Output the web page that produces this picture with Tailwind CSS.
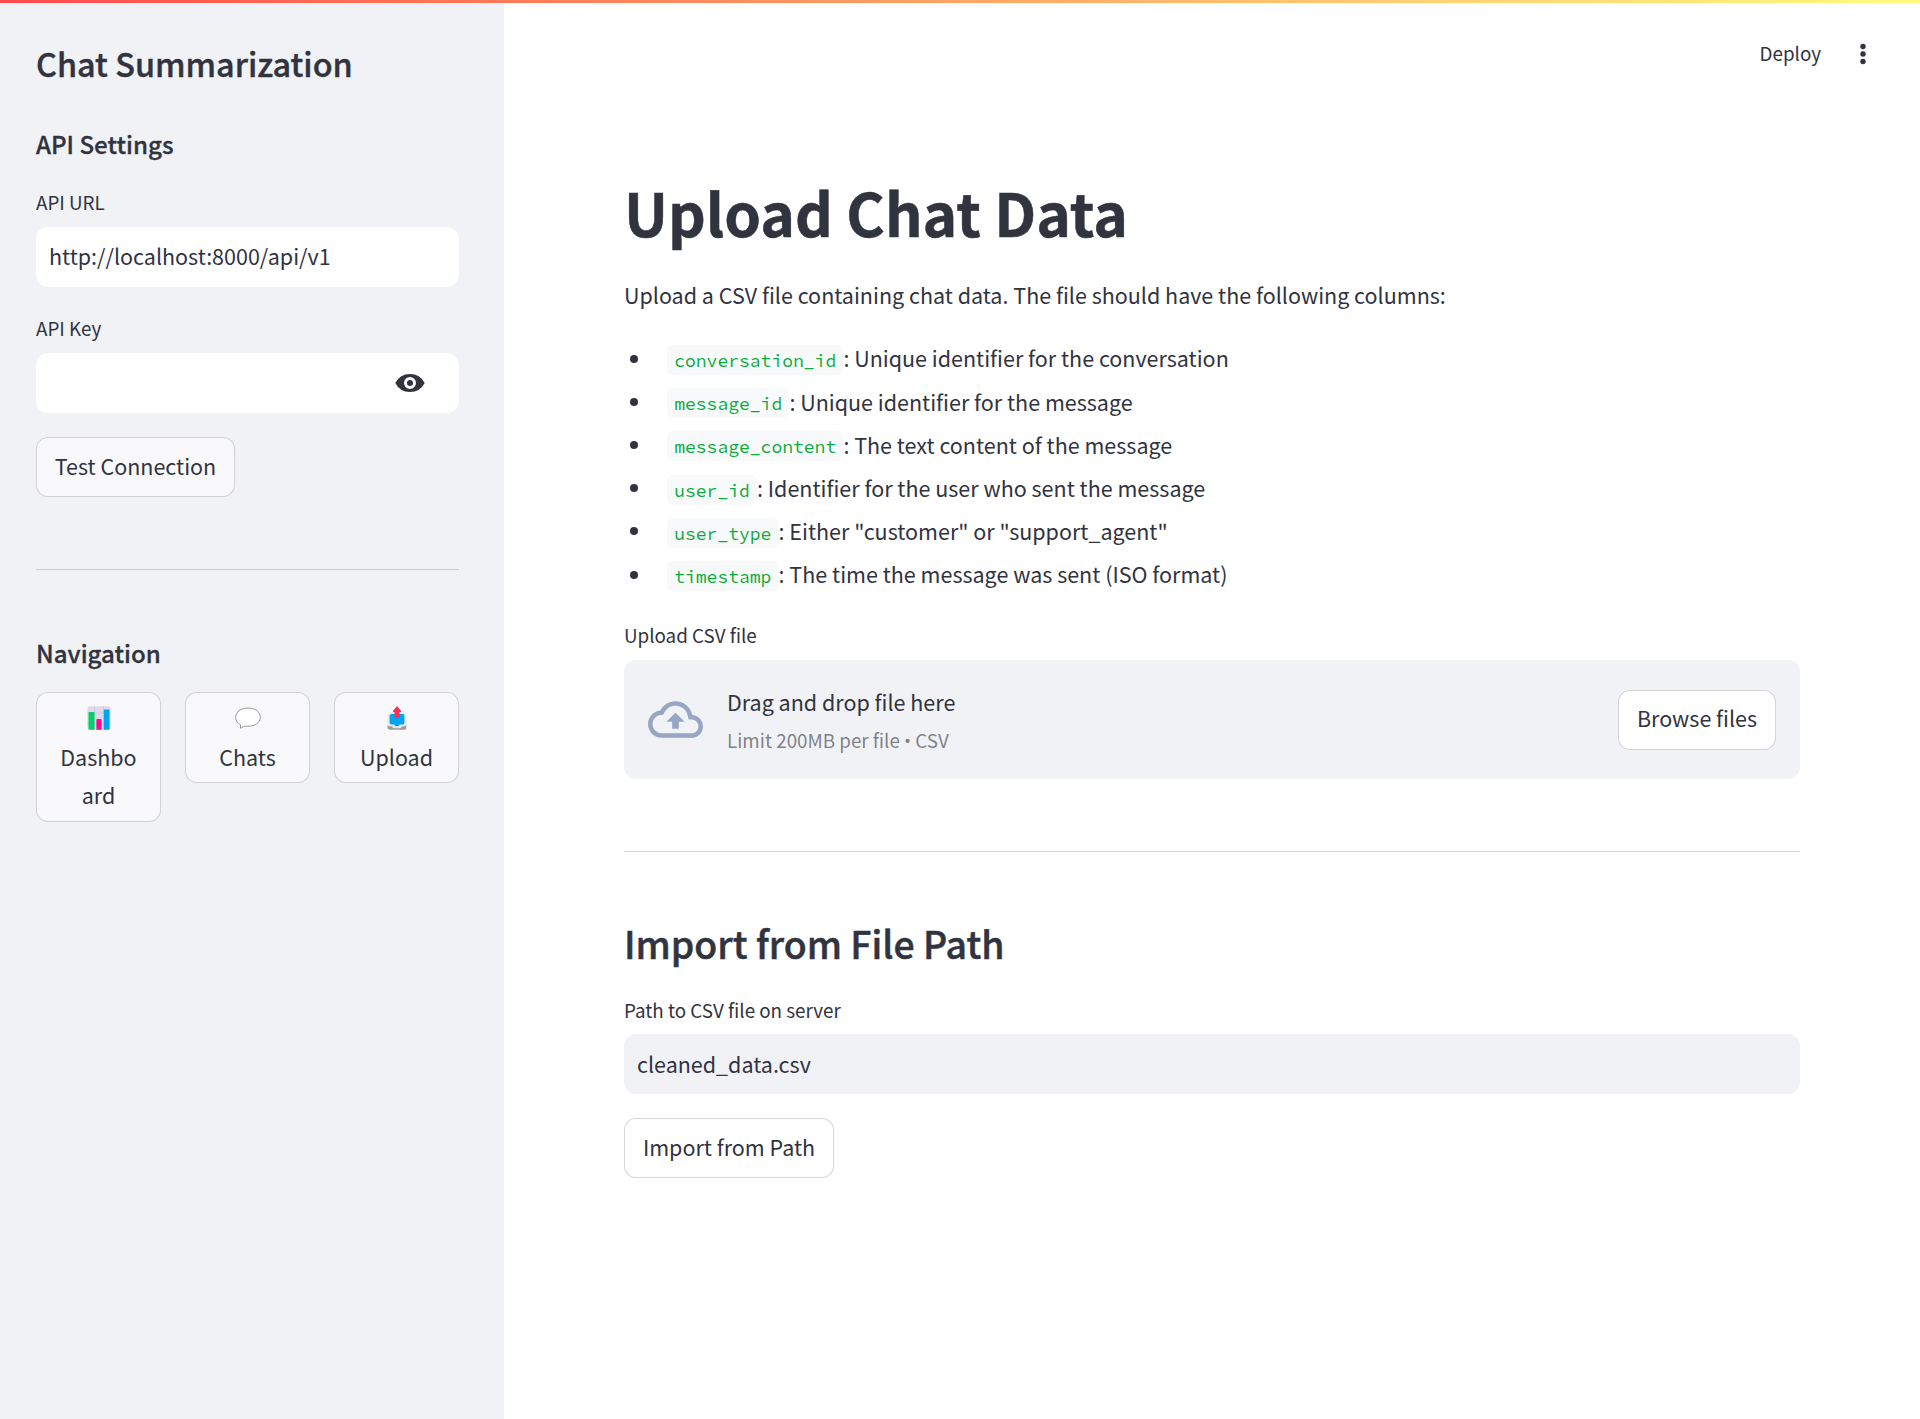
<!DOCTYPE html>
<html lang="en">
<head>
<meta charset="utf-8">
<title>Chat Summarization</title>
<script src="https://cdn.jsdelivr.net/npm/@tailwindcss/browser@4"></script>
</head>
<body class="bg-white text-[#31333f] font-['Noto_Sans_CJK_SC','Noto_Sans',sans-serif] text-[21.5px] leading-[38.4px]">
<div class="relative flex h-[1419px] w-[1920px] overflow-hidden">
  <div class="absolute inset-x-0 top-0 h-[3px] bg-linear-to-r/srgb from-[#ff4b4b] to-[#fffd80]"></div>

  <aside class="flex w-[504px] shrink-0 flex-col bg-[#f0f2f6] pt-[41px] pr-[45px] pl-9">
    <h2 class="text-[32.4px] leading-[44px] font-medium [-webkit-text-stroke:0.4px]">Chat Summarization</h2>
    <h3 class="mt-[43px] text-[24.1px] leading-8 font-medium [-webkit-text-stroke:0.3px]">API Settings</h3>
    <label class="mt-[26px] text-[18.8px] leading-8">API URL</label>
    <div class="mt-[9px] flex h-[60px] items-center rounded-xl bg-white px-[13px] pb-[1px]">http://localhost:8000/api/v1</div>
    <label class="mt-[25px] text-[18.8px] leading-8">API Key</label>
    <div class="mt-[9px] flex h-[60px] items-center justify-end rounded-xl bg-white pr-[34px]">
      <svg class="size-[30px]" viewBox="0 0 20 20" fill="currentColor"><path d="M.2 10a11 11 0 0 1 19.6 0A11 11 0 0 1 .2 10zm9.8 4a4 4 0 1 0 0-8 4 4 0 0 0 0 8zm0-2a2 2 0 1 1 0-4 2 2 0 0 1 0 4z"/></svg>
    </div>
    <button class="mt-6 flex h-[60px] w-[199px] items-center justify-center rounded-xl border border-[#31333f]/20 bg-[#f9f9fc] pb-[2px]">Test Connection</button>
    <hr class="mt-[72px] border-t border-[#31333f]/20">
    <h3 class="mt-[66.500px] text-[24.1px] leading-8 font-medium [-webkit-text-stroke:0.3px]">Navigation</h3>
    <div class="mt-[23.900px] grid grid-cols-3 items-start gap-6">
      <button class="flex flex-col items-center rounded-xl border border-[#31333f]/20 bg-[#f9f9fc] py-[6px]">
        <span class="flex h-[38.4px] items-center pb-[2px]"><svg class="size-6" viewBox="0 0 24 24"><rect x=".3" y=".3" width="23.4" height="23.4" rx="3" fill="#e1d8ec"/><path d="M7.5.3v23.4M16.5.3v23.4M.3 7h23.4M.3 17h23.4" stroke="#cdc4d6" stroke-width=".8"/><path d="M1.5 7a1 1 0 0 1 1-1h4a1 1 0 0 1 1 1v16.7h-5a1 1 0 0 1-1-1z" fill="#00d26a"/><path d="M9.4 14a1 1 0 0 1 1-1h3.2a1 1 0 0 1 1 1v9.7H9.4z" fill="#f70a8d"/><path d="M16.8 4.4a1 1 0 0 1 1-1h3.7a1 1 0 0 1 1 1v18.3a1 1 0 0 1-1 1h-4.7z" fill="#00a6ed"/></svg></span>
        <span>Dashbo</span><span>ard</span>
      </button>
      <button class="flex flex-col items-center rounded-xl border border-[#31333f]/20 bg-[#f9f9fc] py-[6px]">
        <span class="flex h-[38.4px] items-center pb-[2px]"><svg class="h-6 w-[26px]" viewBox="0 0 26 24"><path d="M13 2C6 2 .7 6 .7 11.2c0 3.7 1.8 6 4.8 7.6v3.4l3-1.6c1.5-.5 3-.4 4.5-.4 7 0 12.3-3.6 12.3-9S20 2 13 2z" fill="#fff" stroke="#8f8f91" stroke-width=".9"/></svg></span>
        <span>Chats</span>
      </button>
      <button class="flex flex-col items-center rounded-xl border border-[#31333f]/20 bg-[#f9f9fc] py-[6px]">
        <span class="flex h-[38.4px] items-center pb-[2px]"><svg class="size-6" viewBox="0 0 24 24"><path d="M2.6 19h18.8v2.2a2.5 2.5 0 0 1-2.5 2.5H5.1a2.5 2.5 0 0 1-2.5-2.5z" fill="#9b9b9b"/><path d="M5 6.5h14l2.4 2V20l-4 .6-2 1.7H8.6l-2-1.7-4-.6V8.5z" fill="#e6e6e6"/><path d="M4.6 10a2 2 0 0 1 2-2h10.8a2 2 0 0 1 2 2v6.5a2 2 0 0 1-2 2h-2.6L13.5 20h-3l-1.3-1.5H6.6a2 2 0 0 1-2-2z" fill="#00a6ed"/><path d="M11.3.7a1 1 0 0 1 1.4 0l3.2 4c.5.7.1 1.4-.6 1.4h-.8v5.6h-5V6.1h-.8c-.7 0-1.1-.7-.6-1.4z" fill="#fa2f5b"/></svg></span>
        <span>Upload</span>
      </button>
    </div>
  </aside>

  <div class="flex grow flex-col">
    <header class="flex h-[108px] items-center justify-end gap-[39px] pr-[54px]">
      <span class="pb-[3px] text-[18.8px] leading-8">Deploy</span>
      <svg class="h-6 w-[6px]" viewBox="0 0 6 24" fill="currentColor"><circle cx="3" cy="4.5" r="2.7"/><circle cx="3" cy="12" r="2.7"/><circle cx="3" cy="19.5" r="2.7"/></svg>
    </header>
    <main class="flex flex-col px-[120px] pt-16">
      <h1 class="text-[58.8px] leading-[80px] font-bold [-webkit-text-stroke:0.5px]">Upload Chat Data</h1>
      <p class="mt-6">Upload a CSV file containing chat data. The file should have the following columns:</p>
      <ul class="mt-[25px] flex flex-col gap-[4.8px] [&_code]:mt-[5.6px] [&_code]:self-start [&_code]:rounded-md [&_code]:bg-[#f8f9fb] [&_code]:px-[7.2px] [&_code]:pt-[2px] [&_code]:font-['Source_Code_Pro','Noto_Sans_Mono',monospace] [&_code]:text-[18px] [&_code]:leading-[28px] [&_code]:text-[#09ab3b] [&_i]:mr-[29px] [&_i]:ml-[6px] [&_i]:size-2 [&_i]:rounded-full [&_i]:bg-[#31333f]">
        <li class="flex items-center"><i></i><code>conversation_id</code><span>: Unique identifier for the conversation</span></li>
        <li class="flex items-center"><i></i><code>message_id</code><span>: Unique identifier for the message</span></li>
        <li class="flex items-center"><i></i><code>message_content</code><span>: The text content of the message</span></li>
        <li class="flex items-center"><i></i><code>user_id</code><span>: Identifier for the user who sent the message</span></li>
        <li class="flex items-center"><i></i><code>user_type</code><span>: Either "customer" or "support_agent"</span></li>
        <li class="flex items-center"><i></i><code>timestamp</code><span>: The time the message was sent (ISO format)</span></li>
      </ul>
      <label class="mt-[25px] text-[18.8px] leading-8">Upload CSV file</label>
      <section class="mt-[9.2px] flex h-[119px] items-center rounded-xl bg-[#f0f2f6] px-6">
        <svg class="size-[55px]" viewBox="0 0 24 24" fill="#97a6c3"><path d="M19.35 10.04C18.67 6.59 15.64 4 12 4 9.11 4 6.6 5.64 5.35 8.04 2.34 8.36 0 10.91 0 14c0 3.31 2.69 6 6 6h13c2.76 0 5-2.24 5-5 0-2.64-2.05-4.78-4.65-4.96zM19 18H6c-2.21 0-4-1.79-4-4 0-2.05 1.53-3.76 3.56-3.97l1.07-.11.5-.95C8.08 7.14 9.94 6 12 6c2.62 0 4.88 1.86 5.39 4.43l.3 1.5 1.53.11c1.56.1 2.78 1.41 2.78 2.96 0 1.65-1.35 3-3 3zM8 13h2.55v3h2.9v-3H16l-4-4-4 4z"/></svg>
        <div class="ml-6 flex grow flex-col pt-1">
          <span>Drag and drop file here</span>
          <span class="text-[18.8px] leading-[37px] text-[#31333f]/60">Limit 200MB per file <span class="font-['Open_Sans',sans-serif]">•</span> CSV</span>
        </div>
        <button class="flex h-[60px] w-[158px] items-center justify-center rounded-xl border border-[#31333f]/20 bg-white pb-[2px]">Browse files</button>
      </section>
      <hr class="mt-[72px] border-t border-[#31333f]/20">
      <h2 class="mt-[65px] text-[37.4px] leading-[52px] font-medium [-webkit-text-stroke:0.5px]">Import from File Path</h2>
      <label class="mt-[25px] text-[18.8px] leading-8">Path to CSV file on server</label>
      <div class="mt-[8px] flex h-[60px] items-center rounded-xl bg-[#f0f2f6] px-[13px]">cleaned_data.csv</div>
      <button class="mt-6 flex h-[60px] w-[210px] items-center justify-center rounded-xl border border-[#31333f]/20 bg-white pb-[1px]">Import from Path</button>
    </main>
  </div>
</div>
</body>
</html>
